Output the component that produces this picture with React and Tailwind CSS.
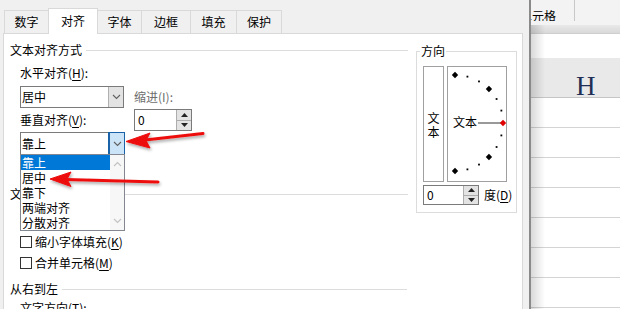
import React from 'react'

const tabs = [
  { label: '数字', w: 'w-[45px]' },
  { label: '对齐', w: 'w-[50px]', active: true },
  { label: '字体', w: 'w-[45px]' },
  { label: '边框', w: 'w-[50px]' },
  { label: '填充', w: 'w-[47px]' },
  { label: '保护', w: 'w-[46px]' },
]

const listItems = ['靠上', '居中', '靠下', '两端对齐', '分散对齐']

function Chevron({ up = false, color = '#606060' }) {
  return (
    <svg width="9" height="6" viewBox="0 0 9 6">
      <path d={up ? 'M1 5 L4.5 1.5 L8 5' : 'M1 1 L4.5 4.5 L8 1'} fill="none" stroke={color} strokeWidth="1.1" />
    </svg>
  )
}

function Select({ value, active = false, children }) {
  return (
    <div className="relative flex h-full border border-[#7a7a7a] bg-white">
      <div className="flex flex-1 items-center pl-[1px]">{value}</div>
      <div
        className={`flex w-[15px] items-center justify-center border-l ${
          active ? 'border-[#1a62a8] bg-[#cce4f7] outline outline-1 outline-[#1a62a8]' : 'border-[#b0b0b0] bg-[#e3e3e3]'
        }`}
      >
        <Chevron />
      </div>
      {children}
    </div>
  )
}

function Spin({ value }) {
  return (
    <div className="flex h-full border border-[#7a7a7a] bg-white">
      <div className="flex flex-1 items-center pl-[3px]">{value}</div>
      <div className="flex w-[15px] flex-col border-l border-[#adadad]">
        <div className="flex flex-1 items-center justify-center border-b border-[#adadad] bg-[#e3e3e3]">
          <svg width="7" height="4" viewBox="0 0 7 4"><path d="M0 4 L3.5 0 L7 4 Z" fill="#222" /></svg>
        </div>
        <div className="flex flex-1 items-center justify-center bg-[#e3e3e3]">
          <svg width="7" height="4" viewBox="0 0 7 4"><path d="M0 0 L3.5 4 L7 0 Z" fill="#222" /></svg>
        </div>
      </div>
    </div>
  )
}

function Check({ label, k }) {
  return (
    <div className="flex h-[16px] items-center gap-[3px]">
      <div className="h-[12px] w-[12px] border border-[#333] bg-white" />
      <span>
        {label}(<u className="underline-offset-2">{k}</u>)
      </span>
    </div>
  )
}

function GroupHead({ label, className = '' }) {
  return (
    <div className={`flex h-[16px] shrink-0 items-center gap-[4px] ${className}`}>
      <span className="whitespace-nowrap">{label}</span>
      <div className="h-px flex-1 bg-[#dcdcdc]" />
    </div>
  )
}

function Dial() {
  const cx = 8
  const cy = 57
  const r = 48
  const marks = []
  for (let a = 90; a >= -90; a -= 15) {
    const rad = (a * Math.PI) / 180
    const x = cx + r * Math.cos(rad)
    const y = cy - r * Math.sin(rad)
    const big = a % 45 === 0
    if (big) {
      marks.push(
        <path
          key={a}
          d={`M${x} ${y - 3.2} L${x + 3.2} ${y} L${x} ${y + 3.2} L${x - 3.2} ${y} Z`}
          fill={a === 0 ? '#e00000' : '#000'}
        />
      )
    } else {
      marks.push(<rect key={a} x={x - 0.9} y={y - 0.9} width="1.8" height="1.8" fill="#000" />)
    }
  }
  return (
    <svg width="60" height="116" viewBox="0 0 60 116">
      <rect x="0.5" y="0.5" width="59" height="115" fill="#fff" stroke="#a0a0a0" />
      <text x="6" y="61" fontSize="12" fill="#000" fontFamily="'Noto Sans CJK SC', sans-serif">文本</text>
      <line x1="31" y1="57" x2="54" y2="57" stroke="#808080" strokeWidth="1.6" />
      {marks}
    </svg>
  )
}

function Arrows() {
  return (
    <svg className="pointer-events-none absolute left-0 top-0 z-30" width="620" height="309" viewBox="0 0 620 309">
      <defs>
        <filter id="sh" x="-20%" y="-50%" width="140%" height="200%">
          <feDropShadow dx="1" dy="2" stdDeviation="1.4" floodColor="#000" floodOpacity="0.35" />
        </filter>
      </defs>
      <g filter="url(#sh)" fill="#ee1111" stroke="#ee1111">
        <line x1="145" y1="140" x2="203" y2="133.5" strokeWidth="3" strokeLinecap="round" />
        <path d="M126 141.5 L150 133 L146 140.5 L150 148 Z" strokeWidth="1" strokeLinejoin="round" />
        <line x1="66" y1="179.5" x2="158" y2="182" strokeWidth="3" strokeLinecap="round" />
        <path d="M50 179 L71 172 L67 179.3 L71 186.5 Z" strokeWidth="1" strokeLinejoin="round" />
      </g>
    </svg>
  )
}

export default function App() {
  return (
    <div className="relative flex h-[309px] w-[620px] overflow-hidden bg-white font-['Noto_Sans_CJK_SC',sans-serif] text-[12px] leading-[16px] text-black">
      {/* Format cells dialog */}
      <div className="flex h-[309px] w-[529px] shrink-0 flex-col overflow-hidden bg-[#f0f0f0]">
        <div className="relative z-10 flex h-[33px] shrink-0 items-end pl-[5px]">
          {tabs.map((t) => (
            <div
              key={t.label}
              className={`-ml-px flex items-center justify-center border border-b-0 border-[#d9d9d9] ${t.w} ${
                t.active ? 'mb-[-1px] h-[26px] bg-white pb-[2px]' : 'h-[23px] bg-[#f0f0f0]'
              }`}
            >
              {t.label}
            </div>
          ))}
        </div>

        <div className="ml-[3px] flex min-h-0 w-[520px] flex-1 overflow-hidden border border-b-0 border-[#d9d9d9] bg-white pl-[6px]">
          {/* left side */}
          <div className="flex w-[398px] shrink-0 flex-col">
            <GroupHead label="文本对齐方式" className="mt-[8px]" />
            <div className="flex shrink-0 gap-[9px] pl-[10px]">
              <div className="flex w-[105px] flex-col">
                <div className="mt-[7px] h-[16px]">
                  水平对齐(<u className="underline-offset-2">H</u>):
                </div>
                <div className="mt-[5px] h-[22px] w-[104px]">
                  <Select value="居中" />
                </div>
                <div className="mt-[4px] h-[16px]">
                  垂直对齐(<u className="underline-offset-2">V</u>):
                </div>
                <div className="relative z-20 mt-[4px] h-[23px]">
                  <Select value="靠上" active>
                    <div className="absolute left-[-1px] top-full flex h-[77px] w-[105px] border border-[#828790] bg-white">
                      <div className="flex flex-1 flex-col">
                        {listItems.map((it, i) => (
                          <div
                            key={it}
                            className={`flex h-[15px] items-center pl-[1px] ${i === 0 ? 'bg-[#0078d7] text-white' : ''}`}
                          >
                            {it}
                          </div>
                        ))}
                      </div>
                      <div className="flex w-[14px] flex-col items-center justify-between bg-[#f7f7f7] py-[6px]">
                        <Chevron up color="#c2c2c2" />
                        <Chevron color="#c2c2c2" />
                      </div>
                    </div>
                  </Select>
                </div>
              </div>
              <div className="flex flex-col">
                <div className="mt-[31px] h-[16px] text-[#6d6d6d]">缩进(I):</div>
                <div className="mt-[4px] h-[22px] w-[58px]">
                  <Spin value="0" />
                </div>
              </div>
            </div>

            <GroupHead label="文本控制" className="mt-[31px]" />
            <div className="flex shrink-0 flex-col pl-[10px]">
              <div className="mt-[32px]">
                <Check label="缩小字体填充" k="K" />
              </div>
              <div className="mt-[5px]">
                <Check label="合并单元格" k="M" />
              </div>
            </div>
            <GroupHead label="从右到左" className="mt-[10px] w-[397px]" />
            <div className="mt-[3px] h-[16px] shrink-0 pl-[10px]">文字方向(T):</div>
          </div>

          {/* orientation group */}
          <div className="relative ml-[8px] mt-[17px] h-[162px] w-[101px] shrink-0 border border-[#dcdcdc] pl-[6px] pt-[14px]">
            <div className="absolute left-[3px] top-[-9px] bg-white px-[1px]">方向</div>
            <div className="flex gap-[3px]">
              <div className="flex h-[116px] w-[21px] flex-col items-center justify-center border border-[#a0a0a0] pt-[2px] leading-[14px]">
                <span>文</span>
                <span>本</span>
              </div>
              <Dial />
            </div>
            <div className="mt-[3px] flex h-[20px] items-center">
              <div className="h-[20px] w-[56px]">
                <Spin value="0" />
              </div>
              <span className="ml-[5px]">
                度(<u className="underline-offset-2">D</u>)
              </span>
            </div>
          </div>
        </div>
      </div>

      <div className="w-[2px] shrink-0 bg-[#8a8a8a]" />

      {/* spreadsheet behind */}
      <div className="relative flex flex-1 flex-col overflow-hidden">
        <div className="pointer-events-none absolute left-0 top-[25px] z-10 h-full w-[14px] bg-gradient-to-r from-black/15 to-transparent" />
        <div className="flex h-[25px] shrink-0 bg-[#f3f3f3]">
          <div className="flex h-[21px] w-[44px] items-center justify-start overflow-hidden border-r border-[#c8c8c8] pt-[10px]">
            <span className="-ml-[11px] whitespace-nowrap">单元格</span>
          </div>
        </div>
        <div className="h-[9px] shrink-0 border-b border-[#cfcfcf] bg-gradient-to-b from-[#e9e9e9] to-[#d9d9d9]" />
        <div className="h-[24px] shrink-0 bg-white" />
        <div className="h-[40px] shrink-0 border-b border-[#c6c6c6] bg-[#e9e9e9] pl-[45px] pt-[14px] font-['Liberation_Serif',serif] text-[27px] leading-[28px] text-[#1f2f55]">
          H
        </div>
        {[0, 1, 2, 3, 4, 5, 6].map((i) => (
          <div key={i} className="h-[30px] shrink-0 border-b border-[#d4d4d4] bg-white" />
        ))}
      </div>

      <Arrows />
    </div>
  )
}
